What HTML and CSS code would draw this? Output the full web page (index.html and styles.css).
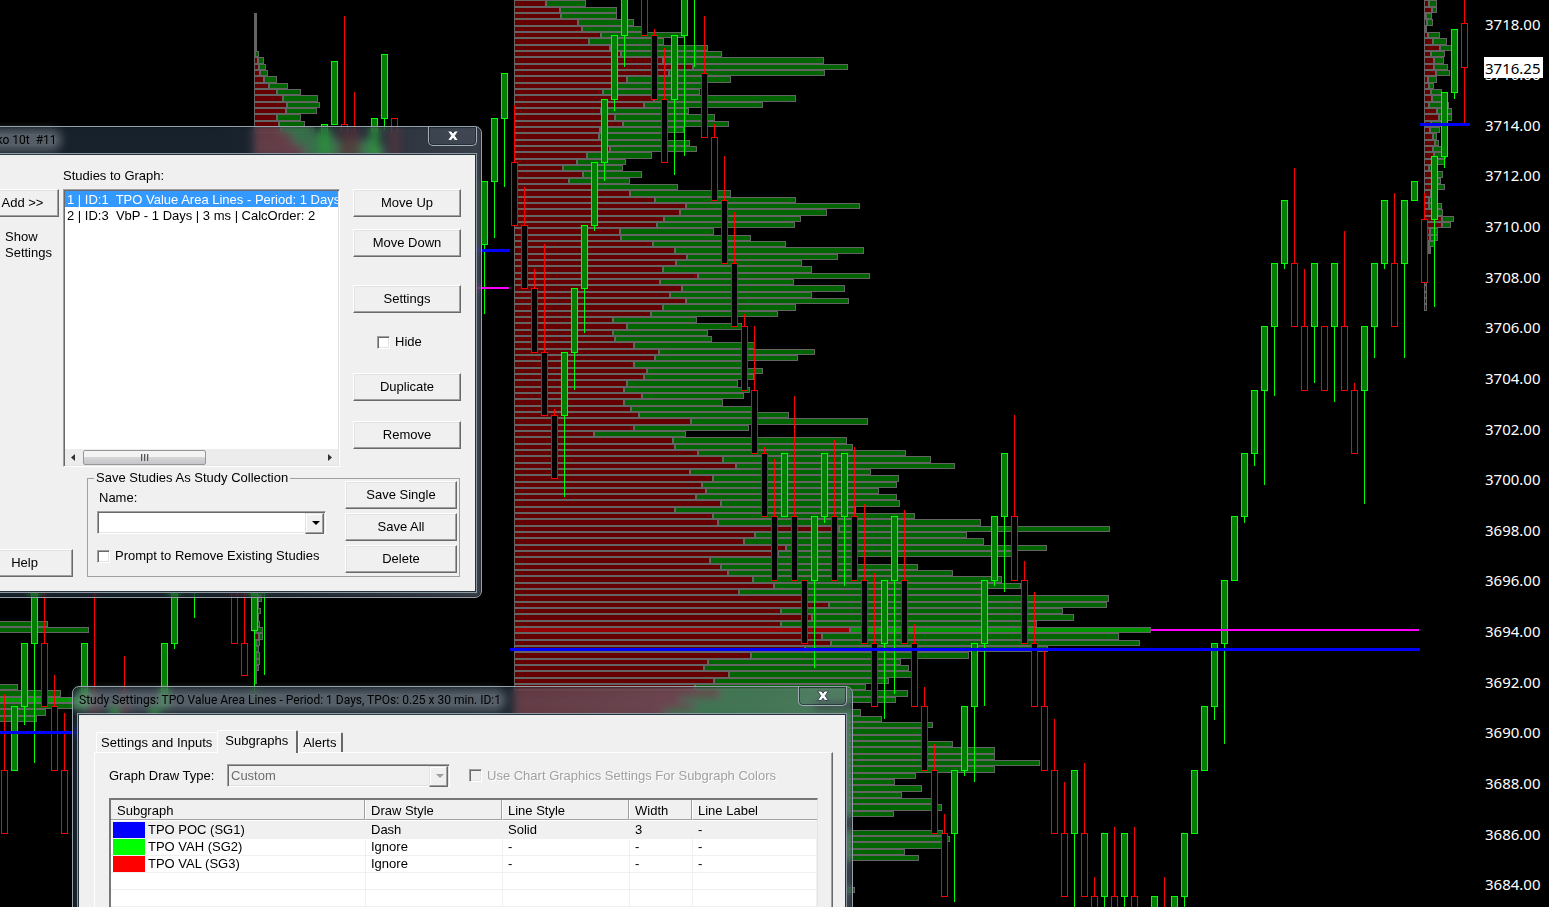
FILE: index.html
```
<!DOCTYPE html>
<html lang="en">
<head>
    <meta charset="UTF-8">
    <title>Chart Studies</title>
    <link rel="stylesheet" href="styles.css">
</head>
<body>
<svg class="chart" id="chart"></svg>

<div class="window studies">
    <div class="title-bar">
        <span class="title">Renko 10t&nbsp; #11</span>
        <button class="close" type="button" aria-label="Close">
            <svg width="14" height="12" viewBox="0 0 14 12"><path d="M1.5 1h3.8L7 3.2 8.700 1h3.800L9.200 5.700 12.500 10.500H8.700L7 8.200 5.300 10.500H1.500L4.800 5.700z" fill="#fff" stroke="#3b4450"/></svg>
        </button>
    </div>
    <div class="client">
        <div class="top">
            <div class="side">
                <button class="btn add" type="button">Add &gt;&gt;</button>
                <p>Show<br>Settings</p>
            </div>
            <div class="graph">
                <div class="list-title" id="list-title">Studies to Graph:</div>
                <div class="listbox" role="listbox" aria-labelledby="list-title">
                    <div class="item current" role="option" aria-selected="true">1 | ID:1&nbsp; TPO Value Area Lines - Period: 1 Days, TPOs</div>
                    <div class="item" role="option">2 | ID:3&nbsp; VbP - 1 Days | 3 ms | CalcOrder: 2</div>
                    <div class="scroll">
                        <svg width="17" height="15"><path d="M10 4v7L6 7.500z" fill="#333"/></svg>
                        <div class="thumb"><i></i><i></i><i></i></div>
                        <svg width="17" height="15"><path d="M7 4v7l4-3.500z" fill="#333"/></svg>
                    </div>
                </div>
            </div>
            <div class="actions">
                <button class="btn" type="button">Move Up</button>
                <button class="btn" type="button">Move Down</button>
                <button class="btn group" type="button">Settings</button>
                <label class="check hide"><input type="checkbox">Hide</label>
                <button class="btn" type="button">Duplicate</button>
                <button class="btn last" type="button">Remove</button>
            </div>
        </div>
        <div class="bottom">
            <button class="btn help" type="button">Help</button>
            <fieldset class="collection">
                <legend>Save Studies As Study Collection</legend>
                <div class="fields">
                    <label for="name">Name:</label>
                    <div class="combo">
                        <select id="name"><option></option></select>
                    </div>
                    <label class="check"><input type="checkbox">Prompt to Remove Existing Studies</label>
                </div>
                <div class="saves">
                    <button class="btn" type="button">Save Single</button>
                    <button class="btn" type="button">Save All</button>
                    <button class="btn" type="button">Delete</button>
                </div>
            </fieldset>
        </div>
    </div>
</div>

<div class="window settings">
    <div class="title-bar">
        <span class="title">Study Settings: TPO Value Area Lines - Period: 1 Days, TPOs: 0.25 x 30 min. ID:1</span>
        <button class="close" type="button" aria-label="Close">
            <svg width="14" height="12" viewBox="0 0 14 12"><path d="M1.5 1h3.8L7 3.2 8.700 1h3.800L9.200 5.700 12.500 10.500H8.700L7 8.200 5.300 10.500H1.500L4.800 5.700z" fill="#fff" stroke="#3b4450"/></svg>
        </button>
    </div>
    <div class="client">
        <div class="tabs" role="tablist">
            <button class="tab" role="tab" type="button">Settings and Inputs</button>
            <button class="tab current" role="tab" type="button" aria-selected="true">Subgraphs</button>
            <button class="tab" role="tab" type="button">Alerts</button>
        </div>
        <div class="panel">
            <div class="draw-type">
                <label for="type">Graph Draw Type:</label>
                <div class="combo disabled">
                    <select id="type" disabled><option>Custom</option></select>
                </div>
                <label class="check disabled"><input type="checkbox" disabled>Use Chart Graphics Settings For Subgraph Colors</label>
            </div>
            <div class="grid">
                <table>
                    <colgroup><col class="c1"><col class="c2"><col class="c3"><col class="c4"><col></colgroup>
                    <thead>
                        <tr><th>Subgraph</th><th>Draw Style</th><th>Line Style</th><th>Width</th><th>Line Label</th></tr>
                    </thead>
                    <tbody>
                        <tr class="current"><td><i class="swatch blue"></i>TPO POC (SG1)</td><td>Dash</td><td>Solid</td><td>3</td><td>-</td></tr>
                        <tr><td><i class="swatch lime"></i>TPO VAH (SG2)</td><td>Ignore</td><td>-</td><td>-</td><td>-</td></tr>
                        <tr><td><i class="swatch red"></i>TPO VAL (SG3)</td><td>Ignore</td><td>-</td><td>-</td><td>-</td></tr>
                        <tr><td></td><td></td><td></td><td></td><td></td></tr>
                        <tr><td></td><td></td><td></td><td></td><td></td></tr>
                        <tr><td></td><td></td><td></td><td></td><td></td></tr>
                    </tbody>
                </table>
            </div>
        </div>
    </div>
</div>
<script src="chart.js"></script>
</body>
</html>
```

FILE: styles.css
```
* {
    margin: 0;
    padding: 0;
    box-sizing: border-box;
}

body {
    height: 100vh;
    overflow: hidden;
    background-color: #000;
    font: 13px/16px "Liberation Sans", Arial, sans-serif;
    color: #000;
}

button, select, input {
    font: inherit;
    color: inherit;
}

/* chart */
.chart {
    display: block;
    width: 100%;
    height: 100%;
    shape-rendering: crispEdges;
}

.chart text {
    font: 15px "Noto Sans", "Open Sans", sans-serif;
    fill: #fff;
}

.chart .last-price {
    fill: #000;
}

/* glass windows */
.window {
    position: absolute;
    padding: 0 5px 5px;
    border: 1px solid #97a3ac;
    border-radius: 7px;
    background: linear-gradient(90deg, rgba(85, 120, 155, .28), rgba(85, 120, 155, .28) 50%, rgba(140, 155, 180, .4));
    backdrop-filter: blur(4px);
    box-shadow: inset 0 0 2px rgba(0, 0, 0, .8);
}

.studies {
    left: -31px;
    top: 126px;
    width: 513px;
}

.settings {
    left: 72px;
    top: 686px;
    width: 781px;
    padding-right: 6px;
}

.title-bar {
    display: flex;
    justify-content: space-between;
    height: 27px;
    margin-right: -1px;
}

.title {
    height: 12px;
    margin: 7px 1px;
    border-radius: 6px;
    background-color: rgba(160, 168, 178, .45);
    box-shadow: 0 0 8px 5px rgba(160, 168, 178, .45);
    font: 12px/12px Roboto, "Open Sans", sans-serif;
    white-space: nowrap;
}

.close {
    width: 49px;
    height: 19px;
    border: 1px solid #a3adb5;
    border-top: 0;
    border-radius: 0 0 5px 5px;
    background: rgba(150, 165, 185, .1);
    box-shadow: inset 0 0 0 1px rgba(20, 30, 40, .6);
}

.close svg {
    display: block;
    margin: 0 auto;
}

.client {
    border: 1px solid #26323c;
    outline: 1px solid #8e9aa3;
    background-color: #f0f0f0;
}

/* controls */
.btn {
    display: block;
    width: 100%;
    height: 28px;
    border: 1px solid;
    border-color: #fff #696969 #696969 #fff;
    background-color: #f0f0f0;
    box-shadow: inset -1px -1px #a0a0a0, inset 1px 1px #e3e3e3;
}

.check {
    display: flex;
    align-items: center;
    gap: 5px;
}

.check input {
    appearance: none;
    width: 13px;
    height: 13px;
    border: 1px solid;
    border-color: #a0a0a0 #fff #fff #a0a0a0;
    background-color: #fff;
    box-shadow: inset 1px 1px #696969, inset -1px -1px #e3e3e3;
}

.check.disabled {
    color: #a0a0a0;
    text-shadow: 1px 1px #fff;
}

.check.disabled input {
    background-color: #f0f0f0;
}

.combo {
    position: relative;
    height: 23px;
    border: 1px solid;
    border-color: #a0a0a0 #fff #fff #a0a0a0;
    background-color: #fff;
    box-shadow: inset 1px 1px #696969, inset -1px -1px #e3e3e3;
}

.combo select {
    appearance: none;
    display: block;
    width: 100%;
    height: 21px;
    padding-left: 3px;
    border: 0;
    background: none;
}

.combo::before {
    content: "";
    position: absolute;
    right: 1px;
    top: 1px;
    width: 17px;
    height: 19px;
    border: 1px solid;
    border-color: #e3e3e3 #696969 #696969 #e3e3e3;
    background-color: #f0f0f0;
    box-shadow: inset -1px -1px #a0a0a0, inset 1px 1px #fff;
}

.combo::after {
    content: "";
    position: absolute;
    right: 5px;
    top: 9px;
    border: 4px solid transparent;
    border-top-color: #000;
    border-bottom: 0;
}

.combo.disabled {
    background-color: #f0f0f0;
}

.combo.disabled select {
    color: #6d6d6d;
    opacity: 1;
}

.combo.disabled::after {
    border-top-color: #a0a0a0;
}

/* studies window */
.top {
    display: flex;
    padding: 12px 14px 0 0;
}

.side {
    width: 87px;
    padding-top: 22px;
}

.add {
    width: 83px;
    padding-left: 10px;
}

.side p {
    padding: 12px 0 0 29px;
}

.graph {
    width: 277px;
    margin-right: 13px;
}

.list-title {
    height: 22px;
    padding-top: 1px;
}

.listbox {
    display: flex;
    flex-direction: column;
    height: 278px;
    padding: 1px;
    border: 1px solid;
    border-color: #a0a0a0 #fff #fff #a0a0a0;
    background-color: #fff;
    box-shadow: inset 1px 1px #696969, inset -1px -1px #e3e3e3;
}

.item {
    height: 16px;
    padding: 1px 0 0 2px;
    white-space: nowrap;
    overflow: hidden;
}

.item.current {
    color: #fff;
    background-color: #39f;
}

.scroll {
    display: flex;
    align-items: center;
    height: 16px;
    margin-top: auto;
    background-color: #ececec;
}

.thumb {
    display: flex;
    justify-content: center;
    align-items: center;
    gap: 1px;
    width: 123px;
    height: 15px;
    margin: 0 auto 0 1px;
    border: 1px solid #979797;
    border-radius: 2px;
    background: linear-gradient(#f3f3f3 50%, #d5d5d8 50%, #c6c6ca);
}

.thumb i {
    width: 2px;
    height: 7px;
    border-left: 1px solid #555;
    background-color: #bbb;
}

.actions {
    flex: 1;
    padding-top: 22px;
}

.actions .btn {
    margin-bottom: 12px;
}

.actions .group {
    margin: 28px 0 21px;
}

.actions .hide {
    margin: 0 0 23px 24px;
}

.actions .last {
    margin-top: 20px;
}

.bottom {
    display: flex;
    align-items: flex-end;
    padding: 3px 15px 14px 0;
}

.help {
    width: 97px;
}

.collection {
    display: flex;
    flex: 1;
    height: 107px;
    margin-left: 14px;
    padding: 0 2px 0 9px;
    border: 1px solid #a0a0a0;
}

.collection legend {
    padding: 0 2px;
    margin-left: -3px;
}

.fields {
    flex: 1;
    padding-top: 4px;
}

.fields > label {
    margin-left: 2px;
}

.fields .combo {
    width: 229px;
    margin: 5px 0 14px;
}

.fields > .check {
    margin-left: 0;
}

.saves {
    width: 112px;
    margin-top: -5px;
}

.saves .btn {
    margin-bottom: 4px;
}

/* settings window */
.settings .client {
    padding: 15px 12px 0 15px;
}

.tabs {
    display: flex;
    align-items: flex-end;
    padding-left: 2px;
}

.tab {
    height: 20px;
    padding: 0 5px 0 4px;
    border: 1px solid;
    border-color: #fff #696969 transparent #fff;
    border-right-width: 0;
    border-bottom: 0;
    border-radius: 2px 2px 0 0;
    background-color: #f0f0f0;
}

.tab.current {
    position: relative;
    height: 23px;
    margin-bottom: -1px;
    padding: 0 8px 3px 7px;
}

.tab.current, .tab:last-child {
    border-right-width: 2px;
}

.panel {
    padding: 11px 14px 0;
    border: 1px solid;
    border-color: #fff #696969 #696969 #fff;
    border-bottom: 0;
    box-shadow: inset -1px 0 #a0a0a0;
}

.draw-type {
    display: flex;
    align-items: center;
}

.draw-type .combo {
    width: 223px;
    margin: 0 19px 0 16px;
}

.draw-type > label:first-child {
    width: 102px;
    white-space: nowrap;
}

.grid {
    margin-top: 11px;
    border: 2px solid #777;
    border-right: 1px solid #e3e3e3;
    border-bottom: 0;
    background-color: #fff;
}

table {
    width: 100%;
    table-layout: fixed;
    border-collapse: separate;
    border-spacing: 0;
}

.c1 {
    width: 255px;
}

.c2 {
    width: 137px;
}

.c3 {
    width: 127px;
}

.c4 {
    width: 63px;
}

th {
    height: 20px;
    padding: 2px 0 0 6px;
    border-right: 1px solid #fff;
    border-bottom: 1px solid #a0a0a0;
    background-color: #f0f0f0;
    box-shadow: inset -1px 0 #a0a0a0;
    font-weight: normal;
    text-align: left;
}

th + th {
    padding-left: 5px;
}

td {
    height: 17px;
    padding-left: 5px;
    border-right: 1px solid #f0f0f0;
    border-bottom: 1px solid #f0f0f0;
    white-space: nowrap;
}

td:first-child {
    padding-left: 2px;
}

th:last-child {
    border-right: 0;
    box-shadow: none;
}

.current td {
    height: 19px;
    padding-top: 1px;
    border-top: 1px solid #fff;
    background-color: #f0f0f0;
}

.swatch {
    display: inline-block;
    width: 32px;
    height: 16px;
    margin-right: 3px;
    vertical-align: top;
}

.blue {
    background-color: #00f;
}

.lime {
    background-color: #0f0;
}

.red {
    background-color: #f00;
}
```

FILE: chart.js
```
var svg = document.getElementById("chart");
var ns = "http://www.w3.org/2000/svg";

function rect(x, y, w, h, fill) {
    if (w <= 0 || h <= 0) return;
    var r = document.createElementNS(ns, "rect");
    r.setAttribute("x", x);
    r.setAttribute("y", y);
    r.setAttribute("width", w);
    r.setAttribute("height", h);
    r.setAttribute("fill", fill);
    svg.appendChild(r);
}

function text(x, y, str, cls) {
    var t = document.createElementNS(ns, "text");
    t.setAttribute("x", x);
    t.setAttribute("y", y);
    if (cls) t.setAttribute("class", cls);
    t.textContent = str;
    svg.appendChild(t);
}

// top of the n-th price row, one row per tick
function rowTop(n) {
    return Math.floor(n * 6.331 + 0.85);
}

// rows: [bid volume, total volume]
function profile(x, first, rows, poc) {
    rows.forEach(function (row, i) {
        var n = first + i;
        var y = rowTop(n);
        var h = rowTop(n + 1) - y;
        rect(x, y, row[1], h, "#646464");
        rect(x + 1, y + 1, row[0] - 1, h - 2, n === poc ? "#960000" : "#640000");
        rect(x + row[0] + 2, y + 1, row[1] - row[0] - 3, h - 2, n === poc ? "#009600" : "#006400");
    });
}

profile(514, 0, [
    [31, 72], [45, 103], [46, 103], [63, 120], [67, 128], [86, 170], [74, 150], [95, 194], [106, 208], [148, 310],
    [178, 334], [154, 311], [112, 217], [99, 188], [88, 186], [139, 282], [129, 249], [86, 175], [100, 201], [108, 215],
    [85, 170], [84, 150], [88, 176], [95, 183], [72, 138], [62, 112], [48, 109], [68, 128], [54, 116], [82, 164],
    [115, 217], [140, 282], [171, 346], [165, 313], [149, 287], [142, 281], [105, 200], [106, 237], [138, 272], [160, 350],
    [172, 324], [161, 288], [148, 298], [183, 356], [145, 280], [167, 331], [155, 298], [171, 335], [148, 282], [136, 264],
    [98, 183], [112, 228], [98, 194], [100, 198], [119, 241], [144, 301], [140, 284], [119, 231], [132, 249], [129, 240],
    [112, 224], [109, 236], [127, 230], [109, 209], [116, 239], [124, 275], [176, 354], [119, 235], [79, 172], [158, 333],
    [160, 339], [183, 392], [208, 417], [221, 441], [175, 357], [198, 385], [187, 383], [191, 365], [181, 383], [206, 386],
    [160, 342], [198, 401], [203, 467], [324, 596], [240, 453], [229, 470], [271, 533], [263, 498], [195, 344], [206, 404],
    [213, 439], [238, 488], [259, 507], [224, 468], [291, 595], [314, 593], [266, 549], [297, 560], [266, 523], [335, 637],
    [307, 605], [316, 626], [290, 534], [236, 455], [193, 387], [189, 395], [214, 398], [199, 375], [180, 352], [205, 394],
    [165, 382], [180, 300], [150, 347], [160, 368], [190, 419], [190, 408], [190, 408], [190, 439], [200, 481], [200, 481],
    [200, 526], [200, 481], [190, 402], [180, 381], [180, 408], [180, 388], [180, 418], [180, 428], [170, 380], [140, 300],
    [140, 300], [180, 429], [180, 436], [180, 428], [170, 391], [170, 405], [140, 320], [140, 320], [140, 320], [140, 320],
    [140, 341]
], 99);

profile(1424, 0, [
    [4, 13], [7, 13], [1, 8], [2, 9], [0, 3], [3, 16], [8, 23], [15, 28], [6, 21], [9, 20],
    [9, 24], [11, 26], [3, 13], [4, 10], [6, 18], [7, 18], [4, 25], [12, 28], [14, 28], [6, 20],
    [5, 16], [8, 13], [10, 15], [8, 18], [9, 22], [7, 21], [4, 11], [7, 19], [7, 17], [7, 21],
    [6, 12], [4, 11], [4, 18], [7, 19], [17, 30], [17, 27], [5, 14], [5, 14], [4, 11], [4, 7],
    [2, 3], [2, 3], [2, 3], [2, 3], [2, 3], [2, 3], [2, 3], [2, 3], [2, 3]
]);

profile(254, 2, [
    [0, 3], [0, 3], [0, 3], [0, 3], [0, 3], [0, 3], [0, 5], [3, 10], [4, 12], [5, 14],
    [9, 23], [14, 34], [22, 47], [28, 64], [32, 66], [31, 63], [22, 47], [24, 51], [26, 60], [36, 80],
    [40, 120], [50, 130], [50, 130]
]);

profile(254, 94, [
    [3, 8], [2, 5], [2, 7], [1, 5], [1, 6], [1, 9], [4, 9], [1, 6], [0, 5], [1, 6],
    [1, 6], [1, 5], [0, 3], [0, 3]
]);

profile(-40, 98, [[20, 88], [20, 129]]);
profile(-40, 108, [[20, 58], [20, 101], [20, 130], [20, 124], [20, 86], [20, 77]], 110);

// [x, up, body top, body bottom, high, low]
var candles = [
    [4, 0, 770, 834, 694], [14, 1, 706, 771], [24, 1, 643, 707, 0, 725], [34, 1, 580, 644, 0, 763],
    [44, 0, 643, 707, 590], [54, 0, 706, 771, 675], [64, 0, 770, 834, 713], [84, 1, 643, 707],
    [94, 0, 706, 771, 590], [114, 1, 706, 771], [124, 0, 706, 771, 656], [154, 1, 706, 771], [164, 1, 643, 707],
    [174, 1, 580, 644, 0, 649], [194, 1, 516, 581, 0, 618], [234, 0, 580, 644], [244, 0, 643, 676, 590],
    [254, 1, 567, 631, 0, 700], [264, 1, 516, 581, 0, 675],
    [324, 1, 124, 188], [334, 1, 61, 125], [344, 0, 124, 188, 16], [354, 0, 137, 188, 92], [374, 1, 118, 182],
    [384, 1, 54, 119, 0, 130], [394, 0, 118, 182],
    [484, 1, 181, 245, 0, 314], [494, 1, 118, 182, 0, 238], [504, 1, 73, 119, 0, 187],
    [514, 0, 162, 226, 105], [524, 0, 225, 289, 187], [534, 0, 288, 353, 269], [544, 0, 352, 416, 244],
    [554, 0, 415, 479, 409], [564, 1, 352, 416, 0, 497], [574, 1, 288, 353, 0, 390], [584, 1, 225, 289, 0, 333],
    [594, 1, 162, 226, 0, 231], [604, 1, 99, 163, 0, 181], [614, 1, 35, 100, 0, 111], [624, 1, -28, 36, 0, 67],
    [644, 0, -28, 36], [654, 0, 35, 100, 29], [664, 0, 99, 163, 48], [674, 1, 35, 100, 0, 175],
    [684, 1, -28, 36, 0, 156], [694, 1, -90, -28, 0, 67], [704, 0, 73, 138, 16], [714, 0, 137, 201, 124],
    [724, 0, 200, 264, 156], [734, 0, 263, 327, 212], [744, 0, 326, 391, 314], [754, 0, 390, 454, 326],
    [764, 0, 453, 517, 447], [774, 0, 516, 581, 459], [784, 1, 453, 517], [794, 0, 516, 581, 396],
    [804, 0, 580, 644], [814, 1, 516, 581, 0, 668], [824, 1, 453, 517, 0, 523], [834, 0, 516, 581, 440],
    [844, 1, 453, 517, 0, 586], [854, 0, 516, 581, 447], [864, 0, 580, 644, 504], [874, 0, 643, 707, 573],
    [884, 1, 580, 644, 0, 719], [894, 1, 516, 581, 0, 694], [904, 0, 580, 644, 510], [914, 0, 643, 707, 624],
    [924, 0, 706, 771, 687], [934, 0, 770, 834, 744], [944, 0, 833, 897, 814], [954, 1, 770, 834, 0, 902],
    [964, 1, 706, 771, 0, 776], [974, 1, 643, 707, 0, 782], [984, 1, 580, 644, 0, 706], [994, 1, 516, 581, 0, 586],
    [1004, 1, 453, 517, 0, 592], [1014, 0, 516, 581, 415], [1024, 0, 580, 644, 561], [1034, 0, 643, 707, 592],
    [1044, 0, 706, 771, 651], [1054, 0, 770, 834, 719], [1064, 0, 833, 897, 782], [1074, 1, 770, 834, 0, 910],
    [1084, 0, 833, 897, 763], [1094, 0, 896, 961, 877], [1104, 1, 833, 897, 0, 910], [1114, 0, 896, 961, 827],
    [1124, 1, 833, 897, 0, 910], [1134, 0, 896, 961, 827], [1154, 1, 896, 961], [1164, 0, 960, 1024, 877],
    [1174, 1, 896, 961], [1184, 1, 833, 897, 0, 910], [1194, 1, 770, 834], [1204, 1, 706, 771],
    [1214, 1, 643, 707, 0, 720], [1224, 1, 580, 644, 0, 744], [1234, 1, 516, 581],
    [1244, 1, 453, 517, 0, 523], [1254, 1, 390, 454, 0, 466], [1264, 1, 326, 391, 0, 485], [1274, 1, 263, 327, 0, 396],
    [1284, 1, 200, 264, 0, 269], [1294, 0, 263, 327, 168], [1304, 0, 326, 391, 269], [1314, 1, 263, 327, 0, 383],
    [1324, 0, 326, 391], [1334, 1, 263, 327, 0, 402], [1344, 0, 326, 391, 231], [1354, 0, 390, 454, 383],
    [1364, 1, 326, 391, 0, 504], [1374, 1, 263, 327, 0, 358], [1384, 1, 200, 264, 0, 269], [1394, 0, 263, 327, 193],
    [1404, 1, 200, 264, 0, 358], [1414, 1, 181, 201], [1424, 0, 219, 283, 193], [1434, 1, 156, 220, 0, 307],
    [1444, 1, 92, 157, 0, 168], [1454, 1, 29, 93, 0, 99], [1464, 0, 23, 68, -1, 123]
];

candles.forEach(function (c) {
    var color = c[1] ? "#0f0" : "#f00";
    if (c[4]) rect(c[0], c[4], 1, c[2] - c[4], color);
    if (c[5]) rect(c[0], c[3], 1, c[5] - c[3], color);
    rect(c[0] - 3, c[2], 7, c[3] - c[2], color);
    rect(c[0] - 2, c[2] + 1, 5, c[3] - c[2] - 2, c[1] ? "#008000" : "#000");
});

// point of control and value lines
rect(0, 731, 100, 3, "#00f");
rect(440, 249, 70, 3, "#00f");
rect(440, 287, 69, 2, "#f0f");
rect(1151, 629, 268, 2, "#f0f");
rect(510, 648, 910, 3, "#00f");
rect(1420, 123, 50, 3, "#00f");

// price scale
for (var i = 0; i <= 17; i++) {
    text(1485, Math.floor(30 + i * 50.63), (3718 - i * 2) + ".00");
}
rect(1484, 57, 59, 21, "#fff");
text(1485, 74, "3716.25", "last-price");
```
